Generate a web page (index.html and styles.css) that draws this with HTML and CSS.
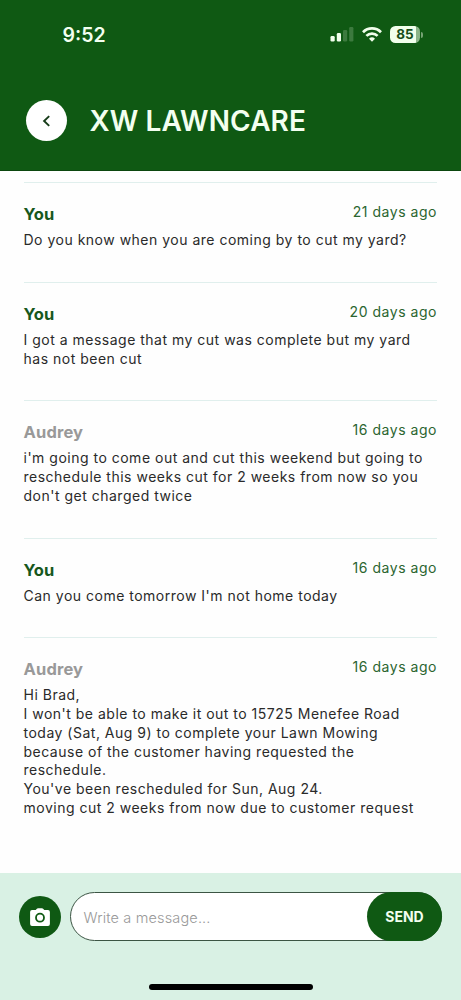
FILE: index.html
```html
<!DOCTYPE html>
<html lang="en">
<head>
<meta charset="utf-8">
<title>XW Lawncare</title>
<link rel="stylesheet" href="styles.css">
</head>
<body>
<div class="screen">
  <header class="header">
    <div class="status">
      <span class="clock">9:52</span>
      <div class="indicators">
        <svg class="signal" width="24" height="15" viewBox="0 0 24 15" fill="#f1ffec">
          <rect x="0.5" y="9" width="4.2" height="5.5" rx="1.2"/>
          <rect x="6.8" y="6" width="4.2" height="8.5" rx="1.2"/>
          <rect x="13" y="3" width="4.2" height="11.5" rx="1.2" opacity=".2"/>
          <rect x="19.2" y="0" width="4.2" height="14.5" rx="1.2" opacity=".2"/>
        </svg>
        <svg class="wifi" width="20" height="15" viewBox="0 0 20 15" fill="none" stroke="#f1ffec" stroke-width="2.7">
          <path d="M1 5.2a12.7 12.7 0 0 1 18 0"/>
          <path d="M4.4 8.9a7.9 7.9 0 0 1 11.2 0"/>
          <path d="M10 14.7l-3-3a4.3 4.3 0 0 1 6 0z" fill="#f1ffec" stroke="none"/>
        </svg>
        <div class="battery"><span class="level">85</span><i class="cap"></i></div>
      </div>
    </div>
    <div class="titlebar">
      <button class="back" aria-label="Back">
        <svg width="10" height="12" viewBox="0 0 10 12" fill="none" stroke="#173c19" stroke-width="1.9"><path d="M7.2 1.1L2.1 6l5.1 4.9"/></svg>
      </button>
      <h1 class="title">XW LAWNCARE</h1>
    </div>
  </header>

  <main class="messages">
    <article class="message">
      <div class="meta"><span class="name">You</span><time class="time">21 days ago</time></div>
      <p class="text">Do you know when you are coming by to cut my yard?</p>
    </article>
    <article class="message">
      <div class="meta"><span class="name">You</span><time class="time">20 days ago</time></div>
      <p class="text">I got a message that my cut was complete but my yard<br>has not been cut</p>
    </article>
    <article class="message">
      <div class="meta"><span class="name other">Audrey</span><time class="time">16 days ago</time></div>
      <p class="text">i'm going to come out and cut this weekend but going to<br>reschedule this weeks cut for 2 weeks from now so you<br>don't get charged twice</p>
    </article>
    <article class="message">
      <div class="meta"><span class="name">You</span><time class="time">16 days ago</time></div>
      <p class="text">Can you come tomorrow I'm not home today</p>
    </article>
    <article class="message">
      <div class="meta"><span class="name other">Audrey</span><time class="time">16 days ago</time></div>
      <p class="text">Hi Brad,<br>I won't be able to make it out to 15725 Menefee Road<br>today (Sat, Aug 9) to complete your Lawn Mowing<br>because of the customer having requested the<br>reschedule.<br>You've been rescheduled for Sun, Aug 24.<br>moving cut 2 weeks from now due to customer request</p>
    </article>
  </main>

  <footer class="composer">
    <div class="row">
      <button class="camera" aria-label="Add photo">
        <svg width="20" height="18" viewBox="0 0 20 18">
          <path fill="#fff" d="M2 2.1h3.7L6.9.7Q7.3.2 8 .2h4q.7 0 1.1.5l1.2 1.4H18q1.9 0 1.9 1.9v12.1q0 1.9-1.9 1.9H2Q.1 18 .1 16.100V4Q.1 2.100 2 2.100z"/>
          <circle cx="10" cy="9.7" r="4" fill="none" stroke="#0f5913" stroke-width="1.8"/>
        </svg>
      </button>
      <div class="field">
        <span class="placeholder">Write a message...</span>
        <button class="send">SEND</button>
      </div>
    </div>
    <div class="home"></div>
  </footer>
</div>
</body>
</html>
```
FILE: styles.css
```css
* { box-sizing: border-box; }
body { margin: 0; font-family: Inter, "Liberation Sans", sans-serif; background: #fff; }
button { border: 0; padding: 0; font-family: inherit; }
.screen { width: 461px; height: 1000px; display: flex; flex-direction: column; overflow: hidden; background: #fefefe; }

.header { height: 171px; flex: none; background: #0f5913; border-bottom: 1px solid #0b460e; color: #f3fff0; }
.status { height: 69px; display: flex; align-items: center; justify-content: space-between; padding: 0 38px 0 62.5px; }
.clock { font-size: 19.5px; font-weight: 600; line-height: 24px; }
.indicators { display: flex; align-items: center; }
.wifi { margin-left: 8px; }
.battery { display: flex; align-items: center; margin-left: 8px; }
.level { width: 30px; height: 17px; border-radius: 5.5px; background: linear-gradient(90deg, #f1ffec 86%, #8bb489 86%); color: #174d19; font-size: 13.5px; font-weight: 700; line-height: 17px; text-align: center; }
.cap { width: 2px; height: 6px; margin-left: 1px; border-radius: 0 2px 2px 0; background: #76a374; }
.titlebar { display: flex; align-items: center; padding: 31px 0 0 26px; }
.back { width: 41px; height: 41px; border-radius: 50%; background: #fff; display: flex; align-items: center; justify-content: center; }
.title { margin: 0 0 0 22.5px; font-size: 28px; line-height: 34px; font-weight: 600; letter-spacing: .1px; white-space: nowrap; }

.messages { flex: 1; padding: 11px 24px 0 23.5px; }
.message { border-top: 1px solid #e0efed; padding: 20px 0 31.95px; }
.meta { display: flex; justify-content: space-between; align-items: flex-start; height: 28.1px; }
.name { font-size: 16.5px; font-weight: 700; line-height: 22px; color: #17571c; }
.name.other { color: #999; letter-spacing: .15px; }
.time { font-size: 14px; line-height: 18px; letter-spacing: .53px; color: #2b6530; }
.text { margin: 0; font-size: 14px; line-height: 18.75px; letter-spacing: .5px; color: #2a2a2a; white-space: nowrap; }

.composer { height: 127px; flex: none; background: #d9f1e4; padding: 19px 19px 0; display: flex; flex-direction: column; align-items: center; }
.row { width: 100%; display: flex; align-items: center; gap: 9px; }
.camera { width: 42px; height: 42px; flex: none; border-radius: 50%; background: #0f5913; display: flex; align-items: center; justify-content: center; }
.field { flex: 1; height: 49px; border: 1px solid #3c5544; border-radius: 25px; background: #fff; display: flex; align-items: center; padding-left: 12.5px; }
.placeholder { flex: 1; padding-top: 2px; font-size: 14.5px; font-weight: 300; letter-spacing: .15px; color: #999; white-space: nowrap; }
.send { width: 75px; height: 49px; margin-right: -1px; flex: none; border-radius: 25px; background: #0f5913; color: #f3fff0; font-size: 14px; font-weight: 700; }
.home { width: 164px; height: 6px; border-radius: 3px; background: #000; margin-top: 43px; }
```
